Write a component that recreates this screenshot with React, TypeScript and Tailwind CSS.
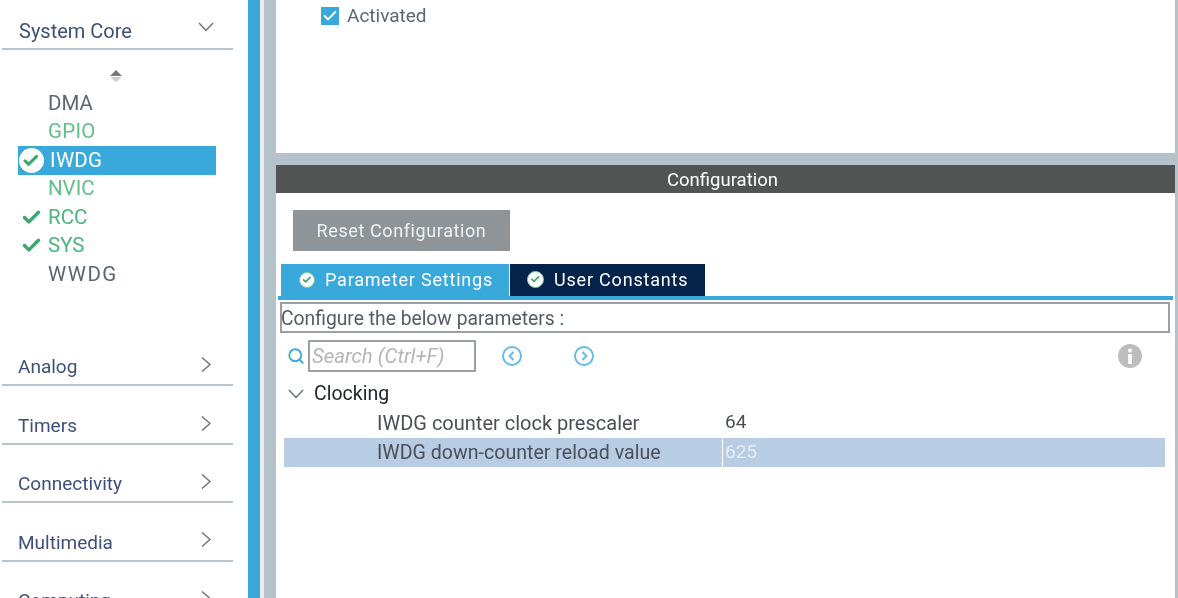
import { Check, Search } from "lucide-react";

const PERIPHERALS = [
  { name: "DMA", tone: "text-[#5c6670]" },
  { name: "GPIO", tone: "text-[#5fc08a] tracking-[0.3px]" },
  { name: "IWDG", tone: "text-white tracking-[0.3px]", selected: true },
  { name: "NVIC", tone: "text-[#5fc08a]" },
  { name: "RCC", tone: "text-[#4cb67e]", checked: true },
  { name: "SYS", tone: "text-[#4cb67e]", checked: true },
  { name: "WWDG", tone: "text-[#5c6670] tracking-[1.5px]" },
];

const CATEGORIES = ["Analog", "Timers", "Connectivity", "Multimedia", "Computing"];

const CheckBadge = ({ className }: { className: string }) => (
  <span className={`flex shrink-0 items-center justify-center rounded-full bg-white ${className}`}>
    <Check className="h-[70%] w-[70%] text-[#3ca66c]" strokeWidth={4} />
  </span>
);

const ArrowDown = ({ className }: { className?: string }) => (
  <svg width="16" height="10" viewBox="0 0 16 10" fill="none" stroke="#6b7278" strokeWidth="1.4" className={className}>
    <path d="M1 1 L8 8.5 L15 1" />
  </svg>
);

const ArrowRight = () => (
  <svg width="10" height="15" viewBox="0 0 10 15" fill="none" stroke="#6b7278" strokeWidth="1.4" className="mb-[6px]">
    <path d="M1 0.5 L9 7.5 L1 14.5" />
  </svg>
);

const CircleArrow = ({ right }: { right?: boolean }) => (
  <svg width="20" height="20" viewBox="0 0 20 20" fill="none" stroke="#62bce6" strokeWidth="2">
    <circle cx="10" cy="10" r="9" />
    <path d={right ? "M8.5 6 L12.5 10 L8.5 14" : "M11.5 6 L7.5 10 L11.5 14"} />
  </svg>
);

const InfoIcon = () => (
  <svg width="24" height="24" viewBox="0 0 24 24" className="ml-auto">
    <circle cx="12" cy="12" r="12" fill="#bdbdbd" />
    <circle cx="12" cy="6.5" r="2" fill="#fff" />
    <rect x="10.2" y="10" width="3.6" height="10" fill="#fff" />
  </svg>
);

const Sidebar = () => (
  <aside className="h-full w-[248px] shrink-0 overflow-hidden bg-white pl-[2px] pr-[15px]">
    <div className="flex h-[50px] items-center justify-between border-b-2 border-[#b9c4cc] pl-[17px] pr-[19px] pt-[13px] text-[20px] text-[#3f4f7a]">
      <span>System Core</span>
      <ArrowDown className="mb-[7px]" />
    </div>
    <div className="mt-[7px] flex h-[32px] flex-col items-center justify-start pt-[13px] pr-[3px]">
      <span className="h-0 w-0 border-x-[6px] border-b-[6px] border-x-transparent border-b-[#777]" />
      <span className="mt-[1px] h-0 w-0 border-x-[6px] border-t-[5px] border-x-transparent border-t-[#ccc]" />
    </div>
    <ul className="ml-[16px] h-[239px] w-[198px] text-[20.5px]">
      {PERIPHERALS.map((item) => (
        <li key={item.name} className={`flex h-[28.5px] items-center ${item.selected ? "bg-[#39a9dc]" : ""} ${item.tone}`}>
          <span className={`flex w-[26px] shrink-0 items-center justify-center ${item.selected ? "mr-[6px]" : "mr-[4px]"}`}>
            {item.selected ? <CheckBadge className="h-[25px] w-[25px]" /> : null}
            {item.checked ? <Check size={21} strokeWidth={4} className="text-[#3ca66c]" /> : null}
          </span>
          {item.name}
        </li>
      ))}
    </ul>
    {CATEGORIES.map((name) => (
      <div
        key={name}
        className="flex h-[58.4px] items-center justify-between border-b-2 border-[#b9c4cc] pl-[16px] pr-[22px] pt-[23px] text-[#3f4f7a]"
      >
        <span>{name}</span>
        <ArrowRight />
      </div>
    ))}
  </aside>
);

const Configuration = () => (
  <section className="min-h-0 flex-1 bg-white">
    <h2 className="flex h-[28px] items-center justify-center bg-[#525453] pr-[6px] pt-[4px] text-[18.5px] text-white">Configuration</h2>
    <div className="pl-[17px] pt-[17px]">
      <button className="flex h-[41px] w-[217px] items-center justify-center bg-[#8f9498] text-[18px] tracking-[0.6px] text-[#f2f2f2]">
        Reset Configuration
      </button>
    </div>
    <div className="ml-[5px] mt-[13px] flex h-[32px] text-[18px] tracking-[0.8px] text-white">
      <div className="flex w-[228px] items-center gap-[10px] bg-[#39a9dc] pb-[1px] pl-[18px]">
        <CheckBadge className="h-[16px] w-[16px] border border-[#7ccaa0]" />
        Parameter Settings
      </div>
      <div className="ml-[1px] flex w-[195px] items-center gap-[10px] bg-[#03234b] pb-[1px] pl-[17px]">
        <CheckBadge className="h-[17px] w-[17px] border border-[#7ccaa0]" />
        User Constants
      </div>
    </div>
    <div className="ml-[2px] mr-[2px] h-[4px] bg-[#39a9dc]" />
    <div className="ml-[4px] mr-[5px] mt-[2px] flex h-[31px] items-center border-2 border-[#9aa0a6] pt-[3px] text-[19.3px] text-[#555b66]">
      <span className="-ml-[1px]">Configure the below parameters :</span>
    </div>
    <div className="mt-[7px] flex h-[32px] items-center pl-[11px] pr-[33px]">
      <Search size={18} strokeWidth={2.4} className="shrink-0 text-[#39a9dc]" />
      <div className="ml-[3px] flex h-[32px] w-[168px] items-center border-2 border-[#9aa0a6] pl-[2px] text-[20.4px] italic text-[#b5b5b5]">
        Search (Ctrl+F)
      </div>
      <div className="ml-[26px]">
        <CircleArrow />
      </div>
      <div className="ml-[52px]">
        <CircleArrow right />
      </div>
      <InfoIcon />
    </div>
    <div className="mt-[6px] flex h-[29px] items-center pl-[12px] pt-[2px] text-[19.5px] text-[#22262b]">
      <ArrowDown />
      <span className="ml-[10px]">Clocking</span>
    </div>
    <div className="ml-[8px] mr-[10px] flex h-[31px] items-center text-[#4a4f57]">
      <span className="w-[438px] pl-[93px] text-[20px]">IWDG counter clock prescaler</span>
      <span className="pl-[3px]">64</span>
    </div>
    <div className="ml-[8px] mr-[10px] flex h-[29px] items-center bg-[#b8cde4] text-[#4a4f57]">
      <span className="w-[438px] pl-[93px] text-[19.6px]">IWDG down-counter reload value</span>
      <span className="flex h-full items-center border-l border-white pl-[2px] text-[#e6eef6]">625</span>
    </div>
  </section>
);

export default function App() {
  return (
    <div className="flex h-[598px] w-[1178px] overflow-hidden bg-white font-['Roboto',sans-serif] text-[19px] blur-[0.5px]">
      <Sidebar />
      <div className="h-full w-[12px] shrink-0 bg-[#39a9dc]" />
      <div className="h-full w-[4px] shrink-0 bg-[#e8edf0]" />
      <main className="flex h-full w-[914px] shrink-0 flex-col border-x-[12px] border-r-[3px] border-[#b6c2ca] bg-[#b6c2ca]">
        <div className="mb-[12px] h-[153px] shrink-0 bg-white pl-[45px] pt-[2px]">
          <label className="flex items-center gap-[8px] text-[#5c6670]">
            <span className="flex h-[18px] w-[18px] items-center justify-center bg-[#39a9dc]">
              <Check size={16} strokeWidth={3} className="text-white" />
            </span>
            Activated
          </label>
        </div>
        <Configuration />
      </main>
    </div>
  );
}
